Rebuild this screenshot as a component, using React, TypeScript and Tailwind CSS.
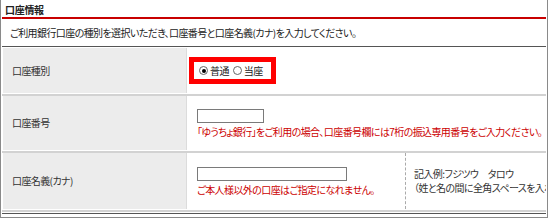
import React from 'react';

const font = 'font-["Noto_Sans_CJK_JP","Noto_Sans",sans-serif] [font-feature-settings:"palt"]';

function Radio({ checked, label }: { checked?: boolean; label: string }) {
  return (
    <label className="flex items-center gap-[2px]">
      <span className="flex h-[9px] w-[9px] items-center justify-center rounded-full border border-[#666] bg-white">
        {checked && <span className="h-[4px] w-[4px] rounded-full bg-black" />}
      </span>
      <span>{label}</span>
    </label>
  );
}

function Row({
  label,
  height,
  children,
}: {
  label: string;
  height: string;
  children: React.ReactNode;
}) {
  return (
    <div className="border-b-2 border-[#d2d2d2] pb-[1px]">
      <div className={`flex ${height}`}>
        <div className="ml-[1px] flex w-[183px] items-center bg-[#ececec] pl-[9px] text-[#333]">
          {label}
        </div>
        <div className="w-[3px] border-l border-[#dcdcdc]" />
        <div className="flex flex-1 overflow-hidden">{children}</div>
      </div>
    </div>
  );
}

export default function App() {
  return (
    <div
      className={`${font} h-[218px] w-[548px] border-x border-b border-[#8a8a8a] bg-white px-[1px] text-[10px] leading-[12px] tracking-[-0.6px] text-[#222]`}
    >
      <div className="flex h-[17px] items-center pl-[3px] pt-[2px] font-bold tracking-[-0.3px]">口座情報</div>
      <div className="h-[2px] bg-[#c80000]" />
      <div className="flex h-[28px] items-center border-b border-[#555] pl-[8px]">
        ご利用銀行口座の種別を選択いただき、口座番号と口座名義(カナ)を入力してください。
      </div>
      <div className="h-[1px]" />

      <Row label="口座種別" height="h-[45px]">
        <div className="flex items-center">
          <div className="flex h-[27px] w-[87px] items-center gap-[4px] border-[5px] border-[#ff0000] pl-[5px]">
            <Radio checked label="普通" />
            <Radio label="当座" />
          </div>
        </div>
      </Row>

      <Row label="口座番号" height="h-[54px]">
        <div className="flex flex-col justify-center pl-[8px]">
          <div className="h-[14px] w-[67px] border border-[#7a7a7a]" />
          <div className="mt-[3px] whitespace-nowrap text-[#cc0000]">
            「ゆうちょ銀行」をご利用の場合、口座番号欄には7桁の振込専用番号をご入力ください。
          </div>
        </div>
      </Row>

      <Row label="口座名義(カナ)" height="h-[56px]">
        <div className="flex w-[216px] flex-col justify-center pl-[8px]">
          <div className="h-[14px] w-[150px] border border-[#7a7a7a]" />
          <div className="mt-[3px] whitespace-nowrap text-[#cc0000]">
            ご本人様以外の口座はご指定になれません。
          </div>
        </div>
        <div className="flex flex-1 flex-col justify-center gap-[2px] overflow-hidden whitespace-nowrap border-l border-dashed border-[#aaa] pl-[8px] text-[#333]">
          <div>記入例:フジツウ　タロウ</div>
          <div>（姓と名の間に全角スペースを入れてください）</div>
        </div>
      </Row>

      <div className="mt-[1px] h-[1px] bg-[#555]" />
    </div>
  );
}
